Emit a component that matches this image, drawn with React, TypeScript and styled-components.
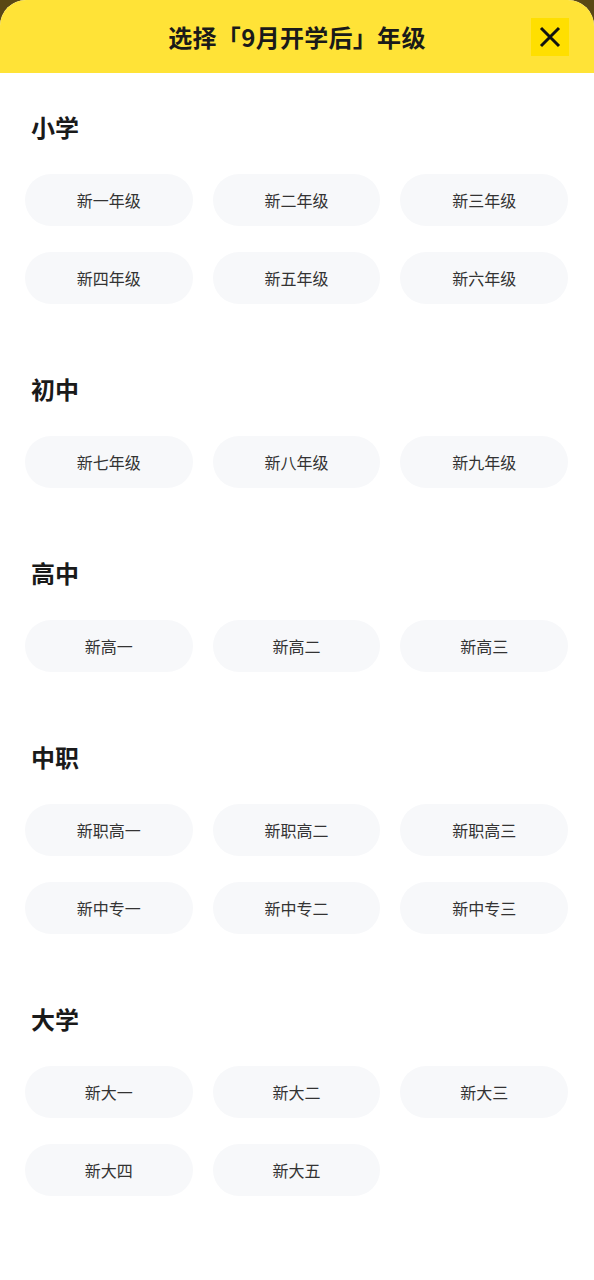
import React from "react";
import styled, { createGlobalStyle } from "styled-components";

const Global = createGlobalStyle`
  html, body { margin: 0; padding: 0; background: #5a4814; }
  body { font-family: "Noto Sans CJK SC", "Noto Sans", sans-serif; }
  * { box-sizing: border-box; }
`;

const Sheet = styled.div`
  min-height: 1280px;
  background: #ffffff;
  border-radius: 26px 26px 0 0;
  overflow: hidden;
`;

const Header = styled.header`
  height: 73px;
  background: #ffe337;
  display: flex;
  align-items: center;
  justify-content: center;
  position: relative;
`;

const Title = styled.h1`
  margin: 0;
  font-size: 24px;
  font-weight: 700;
  color: #1a1a1a;
  line-height: 1;
  letter-spacing: 0.3px;
`;

const Close = styled.button`
  position: absolute;
  right: 25px;
  top: 18px;
  width: 38px;
  height: 38px;
  border: none;
  padding: 0;
  background: #ffdf00;
  display: flex;
  align-items: center;
  justify-content: center;
  cursor: pointer;
`;

const Content = styled.main`
  padding: 42px 26px 40px 25px;
`;

const Section = styled.section`
  margin-bottom: 73px;
`;

const SectionTitle = styled.h2`
  margin: 0 0 35px 6px;
  font-size: 24px;
  line-height: 24px;
  font-weight: 700;
  color: #1a1a1a;
`;

const Grid = styled.div`
  display: grid;
  grid-template-columns: repeat(3, 1fr);
  column-gap: 20px;
  row-gap: 26px;
`;

const Option = styled.button`
  height: 52px;
  border: none;
  border-radius: 26px;
  background: #f7f8fa;
  color: #333333;
  font-family: "Noto Sans CJK SC", "Noto Sans", sans-serif;
  font-size: 16px;
  font-weight: 400;
  display: flex;
  align-items: center;
  justify-content: center;
  padding: 0;
  cursor: pointer;
`;

const data: { title: string; items: string[] }[] = [
  { title: "小学", items: ["新一年级", "新二年级", "新三年级", "新四年级", "新五年级", "新六年级"] },
  { title: "初中", items: ["新七年级", "新八年级", "新九年级"] },
  { title: "高中", items: ["新高一", "新高二", "新高三"] },
  { title: "中职", items: ["新职高一", "新职高二", "新职高三", "新中专一", "新中专二", "新中专三"] },
  { title: "大学", items: ["新大一", "新大二", "新大三", "新大四", "新大五"] },
];

export default function App() {
  return (
    <>
      <Global />
      <Sheet>
        <Header>
          <Title>选择「9月开学后」年级</Title>
          <Close aria-label="关闭">
            <svg width="22" height="22" viewBox="0 0 22 22">
              <path d="M2 2 L20 20 M20 2 L2 20" stroke="#111" strokeWidth="3" strokeLinecap="butt" />
            </svg>
          </Close>
        </Header>
        <Content>
          {data.map((s) => (
            <Section key={s.title}>
              <SectionTitle>{s.title}</SectionTitle>
              <Grid>
                {s.items.map((it) => (
                  <Option key={it}>{it}</Option>
                ))}
              </Grid>
            </Section>
          ))}
        </Content>
      </Sheet>
    </>
  );
}
